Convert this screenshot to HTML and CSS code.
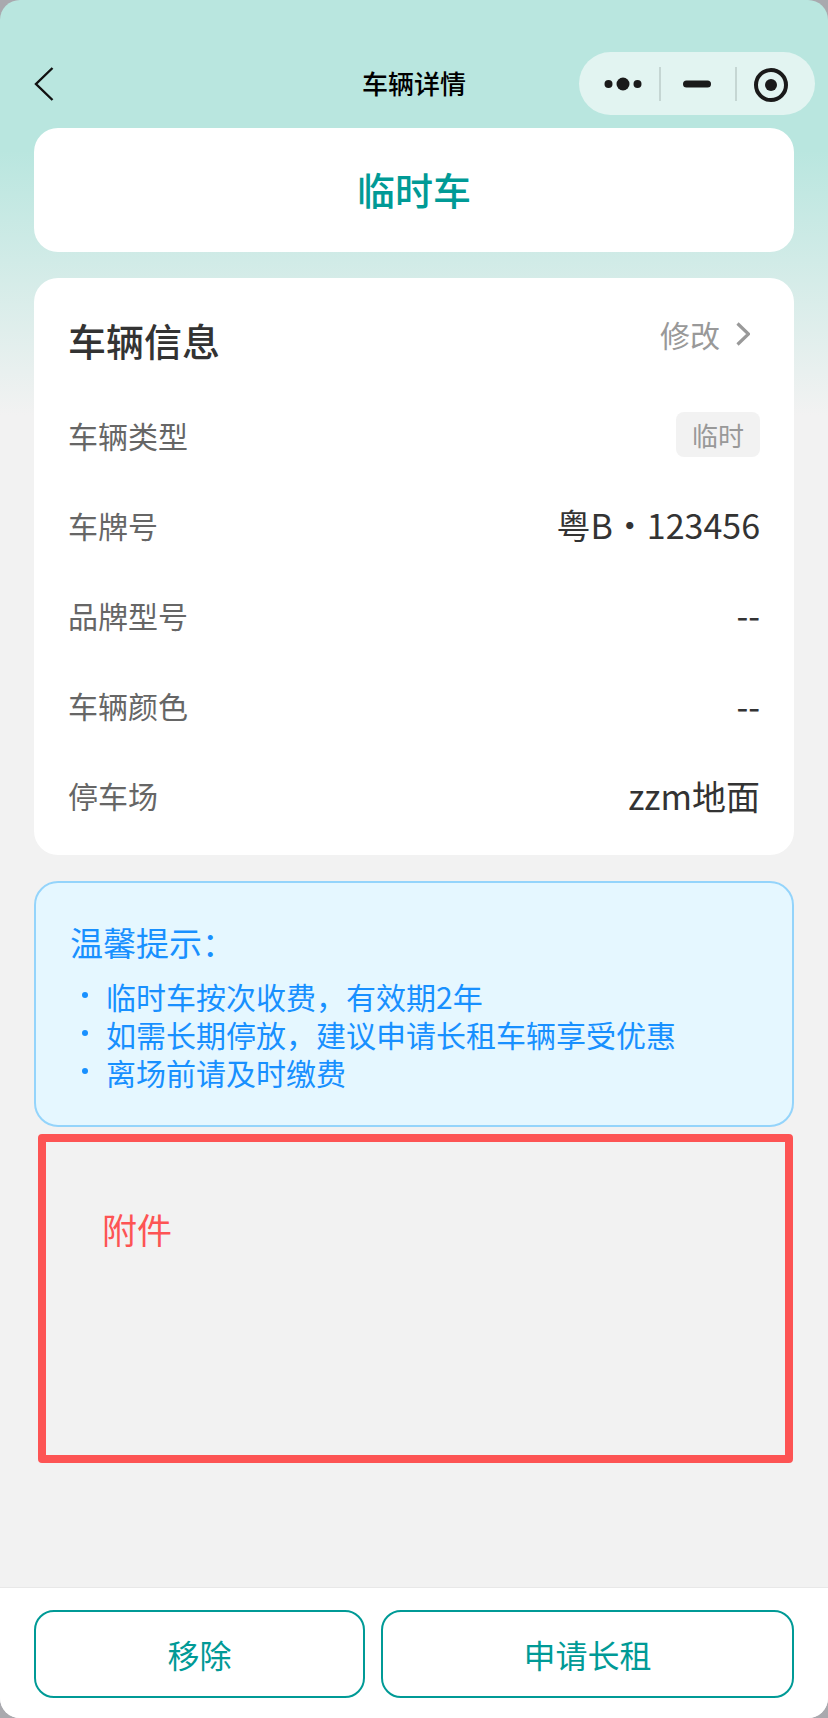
FILE: index.html
```html
<!DOCTYPE html>
<html lang="zh-CN">

<head>
    <meta charset="utf-8">
    <title>车辆详情</title>
    <link rel="stylesheet" href="styles.css">
</head>

<body>
    <div class="page">
        <div class="nav">
            <svg class="nav_back" width="20" height="34" viewBox="0 0 20 34">
                <path d="M18.5 1 L2 17 L18.5 33" fill="none" stroke="#111" stroke-width="2.4" />
            </svg>
            <div class="nav_title">车辆详情</div>
            <div class="capsule">
                <svg class="capsule_svg" width="236" height="63" viewBox="0 0 236 63">
                    <circle cx="29.5" cy="32" r="4" fill="#1a1a1a" />
                    <circle cx="44" cy="32" r="6.5" fill="#1a1a1a" />
                    <circle cx="58.5" cy="32" r="4" fill="#1a1a1a" />
                    <rect x="80" y="15" width="2" height="34" fill="#c5d6d3" />
                    <rect x="104" y="28.5" width="28" height="7" rx="3.5" fill="#1a1a1a" />
                    <rect x="156" y="15" width="2" height="34" fill="#c5d6d3" />
                    <circle cx="192" cy="33" r="15" fill="none" stroke="#1a1a1a" stroke-width="4" />
                    <circle cx="192" cy="33" r="6" fill="#1a1a1a" />
                </svg>
            </div>
        </div>

        <div class="main">
            <div class="card type_card">临时车</div>

            <div class="card info_card">
                <div class="info_head">
                    <div class="info_tit">车辆信息</div>
                    <div class="info_edit">
                        <span>修改</span>
                        <svg width="14" height="24" viewBox="0 0 14 24">
                            <path d="M1.5 1.5 L12.5 12 L1.5 22.5" fill="none" stroke="#999" stroke-width="3.2" />
                        </svg>
                    </div>
                </div>
                <div class="row">
                    <span class="row_label">车辆类型</span>
                    <span class="tag">临时</span>
                </div>
                <div class="row">
                    <span class="row_label">车牌号</span>
                    <span class="row_val">粤B・123456</span>
                </div>
                <div class="row">
                    <span class="row_label">品牌型号</span>
                    <span class="row_val">--</span>
                </div>
                <div class="row">
                    <span class="row_label">车辆颜色</span>
                    <span class="row_val">--</span>
                </div>
                <div class="row">
                    <span class="row_label">停车场</span>
                    <span class="row_val">zzm地面</span>
                </div>
            </div>

            <div class="tips">
                <div class="tips_tit">温馨提示：</div>
                <ul class="tips_list">
                    <li>临时车按次收费，有效期2年</li>
                    <li>如需长期停放，建议申请长租车辆享受优惠</li>
                    <li>离场前请及时缴费</li>
                </ul>
            </div>

            <div class="attach">附件</div>
        </div>

        <div class="foot">
            <div class="btn btn_remove">移除</div>
            <div class="btn btn_apply">申请长租</div>
        </div>
    </div>
</body>

</html>
```

FILE: styles.css
```css
* {
    padding: 0;
    margin: 0;
    box-sizing: border-box;
}

html,
body {
    width: 828px;
    height: 1718px;
    background: #a9a9ae;
    overflow: hidden;
    font-family: "Noto Sans CJK SC", "Noto Sans", sans-serif;
}

ul,
li {
    list-style: none;
}

.page {
    display: flex;
    flex-direction: column;
    height: 1718px;
    border-radius: 20px;
    overflow: hidden;
    background: linear-gradient(#b9e6df 0, #b9e6df 150px, #f2f2f2 415px);
}

.nav {
    display: flex;
    align-items: center;
    position: relative;
    height: 128px;
    padding: 52px 13px 12px 34px;
}

.nav_title {
    position: absolute;
    left: 0;
    right: 0;
    top: 64px;
    text-align: center;
    font-size: 26px;
    line-height: 38px;
    font-weight: 500;
    color: #000;
}

.capsule {
    margin: -2px 0 0 auto;
    width: 236px;
    height: 63px;
    border-radius: 32px;
    background: #e2f4f1;
}

.capsule_svg {
    display: block;
}

.main {
    flex: 1;
    padding: 0 34px;
}

.card {
    background: #fff;
    border-radius: 24px;
}

.type_card {
    height: 124px;
    line-height: 122px;
    text-align: center;
    font-size: 38px;
    font-weight: 500;
    color: #009a96;
}

.info_card {
    height: 577px;
    margin-top: 26px;
    padding: 0 34px;
}

.info_head {
    display: flex;
    justify-content: space-between;
    height: 111.5px;
    padding-top: 31px;
}

.info_tit {
    font-size: 38px;
    line-height: 62px;
    font-weight: 500;
    color: #333;
}

.info_edit {
    display: flex;
    align-items: center;
    gap: 16px;
    height: 50px;
    padding-right: 10px;
    font-size: 30px;
    color: #999;
}

.row {
    display: flex;
    align-items: center;
    justify-content: space-between;
    height: 90.2px;
}

.row_label {
    font-size: 30px;
    color: #666;
}

.row_val {
    font-size: 34px;
    color: #333;
}

.tag {
    width: 84px;
    height: 45px;
    line-height: 45px;
    text-align: center;
    border-radius: 8px;
    background: #f2f2f2;
    font-size: 26px;
    color: #999;
}

.tips {
    height: 246px;
    margin-top: 26px;
    padding: 34px 34px 0;
    background: #e5f7ff;
    border: 2px solid #94d4fb;
    border-radius: 24px;
    color: #1890ff;
}

.tips_tit {
    font-size: 33px;
    line-height: 50px;
}

.tips_list {
    margin-top: 10px;
}

.tips_list li {
    position: relative;
    padding-left: 36px;
    font-size: 30px;
    line-height: 38px;
}

.tips_list li::before {
    content: "";
    position: absolute;
    left: 12px;
    top: 15px;
    width: 6px;
    height: 6px;
    border-radius: 50%;
    background: #1890ff;
}

.attach {
    height: 329px;
    margin: 7px 1px 0 4px;
    padding: 62px 0 0 56px;
    border: 8px solid #fd5454;
    border-radius: 4px;
    font-size: 35px;
    line-height: 50px;
    color: #fd5454;
}

.foot {
    display: flex;
    gap: 16px;
    height: 131px;
    padding: 22px 34px 0;
    background: #fff;
    border-top: 1px solid #e8e8e8;
}

.btn {
    height: 88px;
    line-height: 84px;
    text-align: center;
    border: 2px solid #009a96;
    border-radius: 20px;
    font-size: 32px;
    color: #009a96;
}

.btn_remove {
    width: 331px;
}

.btn_apply {
    width: 413px;
}
```
